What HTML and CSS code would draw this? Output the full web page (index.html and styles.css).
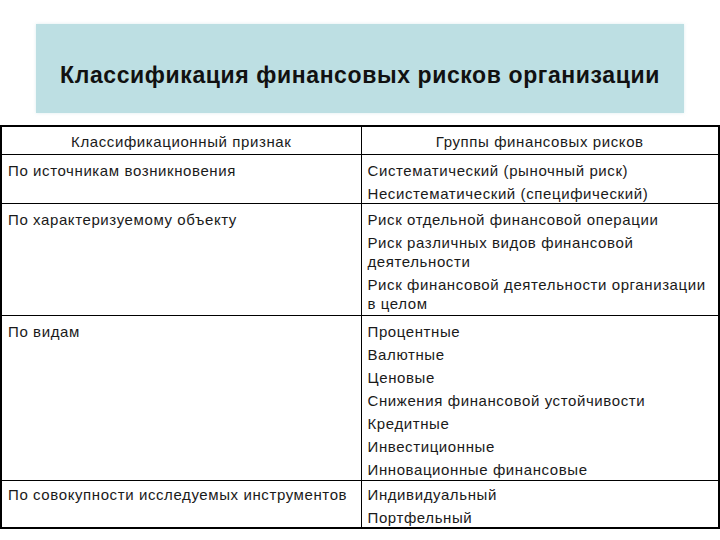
FILE: index.html
```html
<!DOCTYPE html>
<html lang="ru">
<head>
<meta charset="utf-8">
<title>Классификация финансовых рисков организации</title>
<link rel="stylesheet" href="styles.css">
</head>
<body>
<div class="page">
  <div class="title-box">
    <h1 class="title">Классификация финансовых рисков организации</h1>
  </div>
  <table class="risk-table">
    <thead>
      <tr class="head-row">
        <th>Классификационный признак</th>
        <th>Группы финансовых рисков</th>
      </tr>
    </thead>
    <tbody>
      <tr class="row-1">
        <td><p>По источникам возникновения</p></td>
        <td>
          <p>Систематический (рыночный риск)</p>
          <p>Несистематический (специфический)</p>
        </td>
      </tr>
      <tr class="row-2">
        <td><p>По характеризуемому объекту</p></td>
        <td>
          <p>Риск отдельной финансовой операции</p>
          <p>Риск различных видов финансовой деятельности</p>
          <p>Риск финансовой деятельности организации в целом</p>
        </td>
      </tr>
      <tr class="row-3">
        <td><p>По видам</p></td>
        <td>
          <p>Процентные</p>
          <p>Валютные</p>
          <p>Ценовые</p>
          <p>Снижения финансовой устойчивости</p>
          <p>Кредитные</p>
          <p>Инвестиционные</p>
          <p>Инновационные финансовые</p>
        </td>
      </tr>
      <tr class="row-4">
        <td><p>По совокупности исследуемых инструментов</p></td>
        <td>
          <p>Индивидуальный</p>
          <p>Портфельный</p>
        </td>
      </tr>
    </tbody>
  </table>
</div>
</body>
</html>
```
FILE: styles.css
```css
html, body {
  margin: 0;
  padding: 0;
  background: #ffffff;
}

.page {
  width: 720px;
  height: 540px;
  padding-top: 24px;
  box-sizing: border-box;
  font-family: "Liberation Sans", Arial, sans-serif;
  color: #1a1a1a;
}

.title-box {
  margin: 0 36px 0 36px;
  height: 89px;
  background: #bddfe3;
  display: flex;
  align-items: center;
  justify-content: center;
  box-shadow: 0 0 3px rgba(190, 220, 225, 0.5);
}

.title {
  margin: 0;
  padding-top: 14px;
  font-size: 23px;
  font-weight: bold;
  color: #111;
  letter-spacing: 0.6px;
}

.risk-table {
  margin-top: 12px;
  width: 720px;
  border-collapse: collapse;
  border: 2px solid #000;
  font-size: 15px;
  letter-spacing: 0.6px;
  table-layout: fixed;
}

.risk-table th,
.risk-table td {
  border: 1px solid #000;
  vertical-align: top;
  text-align: left;
  padding: 6px 6px 0 6px;
  font-weight: normal;
  line-height: 19px;
}

.risk-table th {
  text-align: center;
  height: 28px;
  padding-top: 5px;
  box-sizing: border-box;
}

.risk-table th:first-child,
.risk-table td:first-child {
  width: 360px;
}

.risk-table p {
  margin: 0 0 4px 0;
}

.risk-table p:last-child {
  margin-bottom: 0;
}

.row-1 td { height: 48px; box-sizing: border-box; }
.row-2 td { height: 112px; box-sizing: border-box; }
.row-3 td { height: 165px; box-sizing: border-box; }
.row-4 td { height: 48px; box-sizing: border-box; padding-top: 4px; }
```
